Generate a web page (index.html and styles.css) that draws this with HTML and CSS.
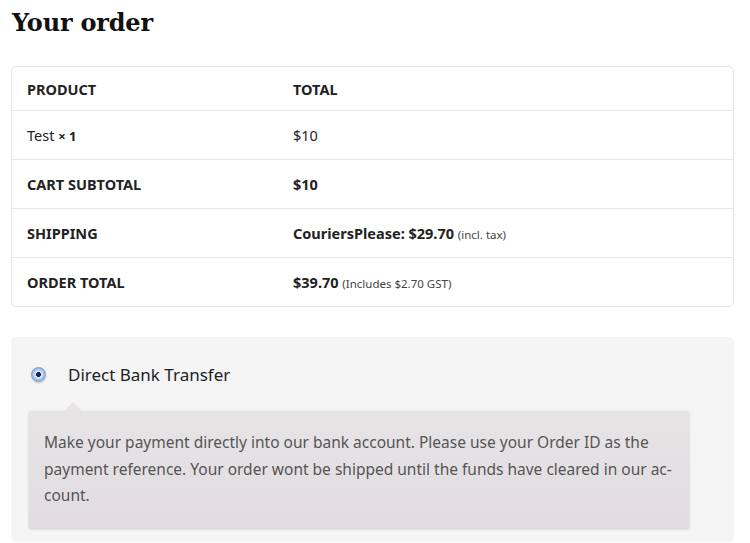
FILE: index.html
```html
<!DOCTYPE html>
<html lang="en">
<head>
    <meta charset="UTF-8">
    <meta name="viewport" content="width=device-width, initial-scale=1.0">
    <title>Your order</title>
    <link rel="stylesheet" href="styles.css">
</head>
<body>

<h1 class="title">Your order</h1>

<table class="order-table">
    <thead>
        <tr>
            <th>Product</th>
            <th>Total</th>
        </tr>
    </thead>
    <tbody>
        <tr>
            <td>Test <b class="qty">&times; 1</b></td>
            <td>$10</td>
        </tr>
    </tbody>
    <tfoot>
        <tr>
            <th>Cart Subtotal</th>
            <td><b>$10</b></td>
        </tr>
        <tr>
            <th>Shipping</th>
            <td><b>CouriersPlease: $29.70</b> <small>(incl. tax)</small></td>
        </tr>
        <tr>
            <th>Order Total</th>
            <td><b>$39.70</b> <small>(Includes $2.70 GST)</small></td>
        </tr>
    </tfoot>
</table>

<div class="payment">
    <label class="method">
        <span class="radio"></span>
        Direct Bank Transfer
    </label>
    <div class="payment-box">
        Make your payment directly into our bank account. Please use your Order ID as the<br>
        payment reference. Your order wont be shipped until the funds have cleared in our ac-<br>
        count.
    </div>
</div>

</body>
</html>
```

FILE: styles.css
```css
body { margin: 0; padding: 0 16px 0 11px; background: #fff; color: #222; font-family: 'Noto Sans', sans-serif; font-size: 14px; }
.title { font-family: 'DejaVu Serif', serif; font-size: 24px; font-weight: bold; color: #111; margin: 6px 0 0 1px; line-height: 34px; letter-spacing: -0.2px; }

.order-table { width: 723px; margin-top: 26px; border: 1px solid #e4e4e4; border-radius: 5px; border-collapse: separate; border-spacing: 0; table-layout: fixed; }
.order-table th, .order-table td { text-align: left; padding: 0 15px; height: 48px; border-top: 1px solid #e8e8e8; color: #222; }
.order-table td { font-size: 14.5px; }
.order-table th { text-transform: uppercase; font-weight: bold; font-size: 14.5px; }
.order-table thead th:first-child { width: 236px; }
.order-table thead th { border-top: none; height: 43px; }
.order-table small { font-size: 11.5px; color: #444; }
.qty { font-size: 13px; }

.payment { margin-top: 30px; background: #f5f5f5; border-radius: 5px; padding: 26px 0 14px 18px; width: 705px; }
.method { display: flex; align-items: center; gap: 22px; font-size: 17px; color: #222; padding-left: 2px; }
.radio { width: 15px; height: 15px; border-radius: 50%; box-sizing: border-box; border: 1px solid #7f9cc6; background: radial-gradient(circle, #1b2a44 0 2.2px, #e4eefc 2.8px, #a8c8f2 5px, #7eaae6 7.5px); box-shadow: 0 1px 2px rgba(0,0,0,0.2); }

.payment-box { position: relative; margin-top: 25px; width: 660px; box-sizing: border-box; padding: 18px 15px 19px 15px; background: linear-gradient(#e7e4e6, #e0dce0); color: #555; font-size: 15.5px; line-height: 26.5px; border-radius: 2px; box-shadow: 0 1px 3px rgba(0,0,0,0.18); }
.payment-box::before { content: ""; position: absolute; top: -9px; left: 35px; border: 9px solid transparent; border-top: none; border-bottom-color: #e7e4e6; }
```
